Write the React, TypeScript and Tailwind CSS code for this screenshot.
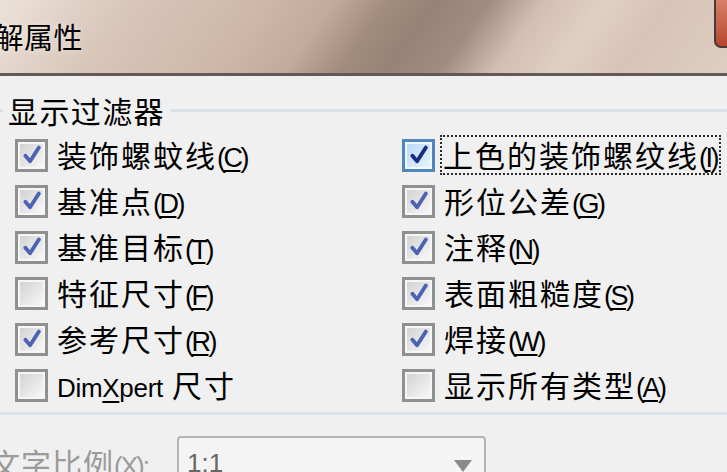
import type { ReactNode } from 'react'

type State = 'on' | 'off' | 'hot'

type Item = {
    text: string
    key?: string
    state: State
    focus?: boolean
    custom?: ReactNode
}

const rows: [Item, Item][] = [
    [
        { text: '装饰螺蚊线', key: 'C', state: 'on' },
        { text: '上色的装饰螺纹线', key: 'I', state: 'hot', focus: true },
    ],
    [
        { text: '基准点', key: 'D', state: 'on' },
        { text: '形位公差', key: 'G', state: 'on' },
    ],
    [
        { text: '基准目标', key: 'T', state: 'on' },
        { text: '注释', key: 'N', state: 'on' },
    ],
    [
        { text: '特征尺寸', key: 'F', state: 'off' },
        { text: '表面粗糙度', key: 'S', state: 'on' },
    ],
    [
        { text: '参考尺寸', key: 'R', state: 'on' },
        { text: '焊接', key: 'W', state: 'on' },
    ],
    [
        {
            text: 'DimXpert 尺寸',
            state: 'off',
            custom: (
                <span className="flex items-baseline">
                    <span className="font-['Liberation_Sans',sans-serif] text-[26px] tracking-[-0.3px]">
                        Dim<span className="underline underline-offset-[4px]">X</span>pert
                    </span>
                    <span className="ml-[9px] text-[30px] tracking-[2px]">尺寸</span>
                </span>
            ),
        },
        { text: '显示所有类型', key: 'A', state: 'off' },
    ],
]

function Box({ state }: { state: State }) {
    const hot = state === 'hot'
    return (
        <div
            className={
                hot
                    ? 'w-[33px] h-[33px] shrink-0 border-[3px] border-[#4f86bb] p-[2px] bg-[#eef8fe]'
                    : 'w-[33px] h-[33px] shrink-0 border-[3px] border-[#8f9090] p-[2px] bg-[#f6f6f6]'
            }
        >
            <div
                className={
                    hot
                        ? 'w-full h-full bg-gradient-to-br from-[#b9dcf5] to-[#e4f4fd] flex items-center justify-center'
                        : 'w-full h-full bg-gradient-to-br from-[#d3d3d3] to-[#f7f7f7] flex items-center justify-center'
                }
            >
                {state !== 'off' && (
                    <svg viewBox="0 0 16 16" className="w-[22px] h-[22px]">
                        <path
                            d="M3.2 8.6 L6.6 12.6 L13 2.6"
                            fill="none"
                            stroke={hot ? '#1b2a86' : '#4e62b4'}
                            strokeWidth="2.8"
                            strokeLinecap="round"
                            strokeLinejoin="round"
                        />
                    </svg>
                )}
            </div>
        </div>
    )
}

function Label({ item }: { item: Item }) {
    const body = item.custom ?? (
        <span className="flex items-baseline">
            <span className="text-[30px] tracking-[2px]">{item.text}</span>
            <span className="font-['Liberation_Sans',sans-serif] text-[27px] tracking-[-2.5px]">
                (<span className="underline underline-offset-[3px]">{item.key}</span>)
            </span>
        </span>
    )
    return (
        <div
            className={
                item.focus
                    ? 'ml-[5px] h-[40px] w-[281px] border-2 border-dotted border-[#2a2a2a] flex items-center pl-[1px]'
                    : 'ml-[9px] h-[40px] flex items-center'
            }
        >
            {body}
        </div>
    )
}

function Check({ item }: { item: Item }) {
    return (
        <div className="h-[46px] flex items-center">
            <Box state={item.state} />
            <Label item={item} />
        </div>
    )
}

export default function App() {
    return (
        <div className="w-[727px] h-[472px] overflow-hidden bg-[#f0f0f0] text-black font-['Noto_Sans_CJK_SC',sans-serif] flex flex-col">
            {/* title bar */}
            <div className="h-[76px] shrink-0 flex items-start justify-between border-b-[3px] border-[#615a56] bg-[linear-gradient(125deg,#ece2da_0%,#e5d8ce_6%,#d9c7ba_16%,#cdb6a7_35%,#c3aa9b_43%,#a28c7e_50%,#978275_56%,#a28c7f_63%,#d3bfb2_70%,#e1cfc3_78%,#d8c4b7_86%,#decdc1_100%)]">
                <div className="h-full flex items-center">
                    <span className="ml-[-35px] text-[29px] tracking-[0.5px] [text-shadow:0_0_6px_rgba(255,255,255,0.6)]">
                        注解属性
                    </span>
                </div>
                <div className="w-[13px] h-[48px] rounded-bl-[7px] border-l-2 border-b-2 border-[#4b3934] bg-gradient-to-b from-[#d6806a] to-[#b8452c]" />
            </div>

            {/* display filter group */}
            <fieldset className="mt-[19px] min-w-0 border-t-[3px] border-b-[3px] border-[#dae2e8] px-0 pb-[4px]">
                <legend className="ml-[3px] px-[5px] text-[30px] leading-[30px] tracking-[1.4px]">显示过滤器</legend>
                <div className="pt-[7px] pl-[15px] grid grid-cols-[387px_1fr]">
                    {rows.map(([l, r], i) => (
                        <div key={i} className="contents">
                            <Check item={l} />
                            <Check item={r} />
                        </div>
                    ))}
                </div>
            </fieldset>

            {/* text scale */}
            <div className="mt-[21px] flex items-start">
                <span className="ml-[-10px] mt-[8px] w-[187px] shrink-0 text-[30px] leading-[36px] tracking-[1px] text-[#9a9a9a]">
                    文字比例
                    <span className="font-['Liberation_Sans',sans-serif] text-[26px] tracking-[-2px]">
                        (<span className="underline">X</span>):
                    </span>
                </span>
                <div className="w-[309px] h-[48px] shrink-0 rounded-[4px] border-2 border-[#b3b3b3] bg-[#f4f4f4] flex items-start justify-between pl-[8px] pr-[12px] pt-[10px]">
                    <span className="font-['Liberation_Sans',sans-serif] text-[26px] leading-[30px] text-[#6b6660]">1:1</span>
                    <svg viewBox="0 0 12 8" className="w-[18px] h-[12px] mt-[12px]">
                        <path d="M0 0 H12 L6 8 Z" fill="#8a8a8a" />
                    </svg>
                </div>
            </div>
        </div>
    )
}
